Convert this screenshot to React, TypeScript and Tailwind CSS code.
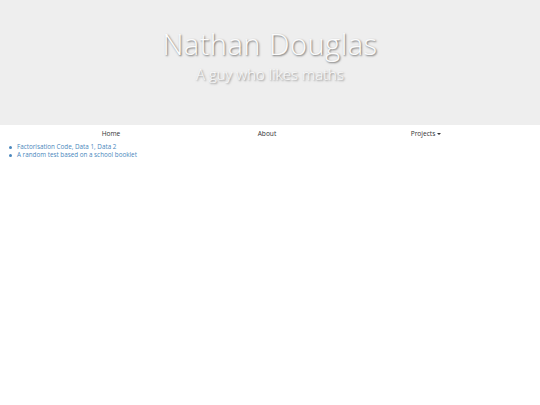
import React from "react";

const items: React.ReactNode[] = [
  <>
    <span>Factorisation Code</span>, <span>Data 1</span>, <span>Data 2</span>
  </>,
  <>A random test based on a school booklet</>,
];

export default function App() {
  return (
    <div className="w-[540px] h-[405px] bg-white" style={{ fontFamily: '"Open Sans", "DejaVu Sans", sans-serif' }}>
      <header className="h-[125px] bg-[#eeeeee] flex flex-col items-center pt-[27px]">
        <h1 className="text-[29px] leading-[34px] font-light text-[#fbfbfb] tracking-[0.5px] [text-shadow:1px_1px_2px_rgba(0,0,0,0.55)]">
          Nathan Douglas
        </h1>
        <p className="mt-[3px] text-[15px] leading-[20px] font-light text-[#fbfbfb] [text-shadow:1px_1px_2px_rgba(0,0,0,0.5)]">
          A guy who likes maths
        </p>
      </header>
      <nav className="flex h-[17px] items-center text-[6.6px] text-[#333] pt-[1px]">
        <div className="w-[222px] text-center">Home</div>
        <div className="w-[90px] text-center">About</div>
        <div className="flex-1 text-center flex items-center justify-center gap-[2px]">
          <span>Projects</span>
          <span className="inline-block w-0 h-0 border-l-[2px] border-r-[2px] border-t-[2px] border-l-transparent border-r-transparent border-t-[#333]" />
        </div>
      </nav>
      <ul className="mt-[1px] text-[6.3px] leading-[8px] text-[#4a87bd]">
        {items.map((it, i) => (
          <li key={i} className="flex items-center">
            <span className="w-[3px] h-[3px] rounded-full bg-[#4a87bd] ml-[9px] mr-[5px]" />
            <span>{it}</span>
          </li>
        ))}
      </ul>
    </div>
  );
}
